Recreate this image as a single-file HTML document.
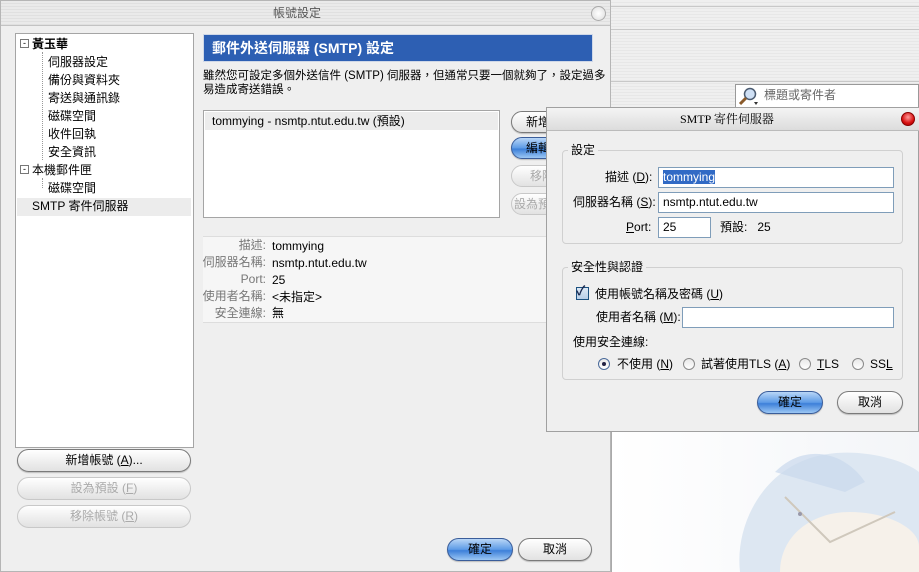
<!DOCTYPE html>
<html><head><meta charset="utf-8">
<style>
*{box-sizing:border-box;margin:0;padding:0}
body{width:919px;height:572px;overflow:hidden;position:relative;background:#ececec;font-family:"Liberation Sans","Noto Sans CJK TC",sans-serif;font-size:12px;color:#000}
.a{position:absolute}
.t{position:absolute;white-space:nowrap;line-height:14px}
.btn{position:absolute;border:1px solid #7a7a7a;border-radius:12px;background:linear-gradient(#fff,#f0f0f0 50%,#e2e2e2);text-align:center;font-size:12px;line-height:20px;box-shadow:0 1px 1px #bbb}
.dis{color:#aaa;border-color:#c8c8c8;box-shadow:none}
.blue{background:linear-gradient(#b9d6f7,#5d9be6 50%,#3c7fd9 55%,#9cc7f4);border-color:#3a5d9a}
.inp{position:absolute;background:#fff;border:1px solid #7f9db9;height:21px;padding-left:4px;line-height:19px;font-size:12px}
.grp{position:absolute;border:1px solid #d0d0d0;border-radius:4px}
.rad{position:absolute;width:12px;height:12px;border-radius:50%;border:1px solid #8a8a8a;background:linear-gradient(#e8e8e8,#fff)}
.lbl{position:absolute;white-space:nowrap;line-height:14px;color:#777;right:0;text-align:right}
</style></head><body>
<!-- right background window -->
<div class="a" style="left:610px;top:0;width:309px;height:432px;background:repeating-linear-gradient(#efefef 0 2px,#e7e7e7 2px 3px)"></div>
<div class="a" style="left:610px;top:6px;width:309px;height:1px;background:#c8c8c8"></div>
<div class="a" style="left:610px;top:29px;width:309px;height:1px;background:#c8c8c8"></div>
<div class="a" style="left:610px;top:81px;width:309px;height:1px;background:#c8c8c8"></div>
<div class="a" style="left:735px;top:84px;width:184px;height:24px;background:#fff;border:1px solid #999"></div>
<svg class="a" style="left:738px;top:87px" width="22" height="20"><circle cx="12" cy="7" r="5.5" fill="#cfe0f5" stroke="#4a5a70" stroke-width="1.5"/><line x1="8" y1="11" x2="2" y2="17" stroke="#8a5a2a" stroke-width="3"/><path d="M16 15l4 0-2 3z" fill="#333"/></svg>
<div class="t" style="left:764px;top:88px;color:#666">標題或寄件者</div>
<div class="a" style="left:610px;top:431px;width:309px;height:141px;background:linear-gradient(90deg,#fff,#f3f5f8)"></div>
<div class="a" style="left:611px;top:431px;width:1px;height:141px;background:#aaa"></div>
<svg class="a" style="left:735px;top:432px" width="184" height="140"><path d="M5 140C0 95 25 45 70 28C110 12 165 25 184 40V140Z" fill="#dde7f2"/><path d="M45 140C45 105 75 80 115 80C150 80 184 95 184 115V140Z" fill="#f6f1ea"/><path d="M40 40C70 10 110 20 130 50L110 60Z" fill="#c9d9ec" opacity=".7"/><path d="M50 65L95 110 160 80" fill="none" stroke="#cfc8bc" stroke-width="2"/><circle cx="65" cy="82" r="2" fill="#99a"/></svg>

<!-- main dialog -->
<div class="a" style="left:0;top:0;width:611px;height:572px;background:#efefef;border:1px solid #b5b5b5"></div>
<div class="a" style="left:1px;top:1px;width:609px;height:25px;background:repeating-linear-gradient(#eaeaea 0 2px,#e0e0e0 2px 3px);border-bottom:1px solid #c3c3c3"></div>
<div class="t" style="left:273px;top:6px;color:#555">帳號設定</div>
<div class="a" style="left:591px;top:6px;width:15px;height:15px;border-radius:50%;border:1px solid #aaa;background:radial-gradient(#fff,#ddd)"></div>

<div class="a" style="left:15px;top:33px;width:179px;height:415px;background:#fff;border:1px solid #a5a5a5"></div>
<div class="a" style="left:17px;top:198px;width:174px;height:18px;background:#ececec"></div>
<div class="a" style="left:42px;top:52px;width:0;height:108px;border-left:1px dotted #999"></div>
<div class="a" style="left:42px;top:178px;width:0;height:10px;border-left:1px dotted #999"></div>
<div class="a" style="left:20px;top:39px;width:9px;height:9px;border:1px solid #777;font-size:9px;line-height:6px;text-align:center">-</div>
<div class="a" style="left:20px;top:165px;width:9px;height:9px;border:1px solid #777;font-size:9px;line-height:6px;text-align:center">-</div>
<div class="t" style="left:32px;top:37px;font-weight:bold">黃玉華</div>
<div class="t" style="left:48px;top:55px">伺服器設定</div>
<div class="t" style="left:48px;top:73px">備份與資料夾</div>
<div class="t" style="left:48px;top:91px">寄送與通訊錄</div>
<div class="t" style="left:48px;top:109px">磁碟空間</div>
<div class="t" style="left:48px;top:127px">收件回執</div>
<div class="t" style="left:48px;top:145px">安全資訊</div>
<div class="t" style="left:32px;top:163px">本機郵件匣</div>
<div class="t" style="left:48px;top:181px">磁碟空間</div>
<div class="t" style="left:32px;top:199px">SMTP 寄件伺服器</div>

<div class="btn" style="left:17px;top:449px;width:174px;height:23px">新增帳號 (<u>A</u>)...</div>
<div class="btn dis" style="left:17px;top:477px;width:174px;height:23px">設為預設 (<u>F</u>)</div>
<div class="btn dis" style="left:17px;top:505px;width:174px;height:23px">移除帳號 (<u>R</u>)</div>

<div class="a" style="left:203px;top:34px;width:390px;height:28px;background:#2d5fb3;border:1px solid #cfd8e8"></div>
<div class="t" style="left:212px;top:40px;color:#fff;font-weight:bold;font-size:14px;line-height:16px">郵件外送伺服器 (SMTP) 設定</div>
<div class="t" style="left:203px;top:69px;font-size:11.5px">雖然您可設定多個外送信件 (SMTP) 伺服器，但通常只要一個就夠了，設定過多</div>
<div class="t" style="left:203px;top:83px;font-size:11.5px">易造成寄送錯誤。</div>

<div class="a" style="left:203px;top:110px;width:297px;height:108px;background:#fff;border:1px solid #a5a5a5"></div>
<div class="a" style="left:205px;top:112px;width:293px;height:18px;background:#ececec"></div>
<div class="t" style="left:212px;top:114px">tommying - nsmtp.ntut.edu.tw (預設)</div>

<div class="btn" style="left:511px;top:111px;width:60px;height:22px;text-align:left;padding-left:14px">新增</div>
<div class="btn blue" style="left:511px;top:137px;width:60px;height:22px;text-align:left;padding-left:14px">編輯</div>
<div class="btn dis" style="left:511px;top:165px;width:60px;height:22px;text-align:left;padding-left:18px">移除</div>
<div class="btn dis" style="left:511px;top:193px;width:60px;height:22px;text-align:left;padding-left:2px">設為預設</div>

<div class="a" style="left:203px;top:236px;width:345px;height:87px;background:#f6f6f6;border-top:1px solid #ddd;border-bottom:1px solid #ddd"></div>
<div class="a" style="left:200px;top:238px;width:66px;height:80px">
<div class="lbl" style="top:0">描述:</div>
<div class="lbl" style="top:17px">伺服器名稱:</div>
<div class="lbl" style="top:34px">Port:</div>
<div class="lbl" style="top:51px">使用者名稱:</div>
<div class="lbl" style="top:68px">安全連線:</div>
</div>
<div class="t" style="left:272px;top:239px">tommying</div>
<div class="t" style="left:272px;top:256px">nsmtp.ntut.edu.tw</div>
<div class="t" style="left:272px;top:273px">25</div>
<div class="t" style="left:272px;top:290px">&lt;未指定&gt;</div>
<div class="t" style="left:272px;top:306px">無</div>

<div class="btn blue" style="left:447px;top:538px;width:66px;height:23px">確定</div>
<div class="btn" style="left:518px;top:538px;width:74px;height:23px">取消</div>

<!-- SMTP dialog -->
<div class="a" style="left:546px;top:107px;width:373px;height:325px;background:#efefef;border:1px solid #a0a0a0"></div>
<div class="a" style="left:547px;top:108px;width:372px;height:23px;background:linear-gradient(#f4f4f4,#dcdcdc);border-bottom:1px solid #bbb"></div>
<div class="t" style="left:680px;top:112px;font-family:'Liberation Serif','Noto Serif CJK SC',serif">SMTP 寄件伺服器</div>
<div class="a" style="left:901px;top:112px;width:14px;height:14px;border-radius:50%;background:radial-gradient(circle at 50% 35%,#ff9a9a,#d81010 60%,#900);border:1px solid #800"></div>

<div class="grp" style="left:562px;top:150px;width:341px;height:94px"></div>
<div class="t" style="left:568px;top:143px;background:#efefef;padding:0 3px">設定</div>
<div class="t" style="left:605px;top:170px">描述 (<u>D</u>):</div>
<div class="t" style="left:573px;top:195px">伺服器名稱 (<u>S</u>):</div>
<div class="t" style="left:626px;top:220px"><u>P</u>ort:</div>
<div class="inp" style="left:658px;top:167px;width:236px"><span style="background:#316ac5;color:#fff">tommying</span></div>
<div class="inp" style="left:658px;top:192px;width:236px">nsmtp.ntut.edu.tw</div>
<div class="inp" style="left:658px;top:217px;width:53px">25</div>
<div class="t" style="left:720px;top:220px">預設:&nbsp;&nbsp;&nbsp;25</div>

<div class="grp" style="left:562px;top:267px;width:341px;height:113px"></div>
<div class="t" style="left:568px;top:260px;background:#efefef;padding:0 3px">安全性與認證</div>
<div class="a" style="left:576px;top:287px;width:13px;height:13px;border:1px solid #1c5180;background:linear-gradient(#dce8f5,#b8cfe8)"></div>
<div class="t" style="left:576px;top:284px;font-weight:bold;font-size:13px;color:#1a2a50">✓</div>
<div class="t" style="left:595px;top:287px">使用帳號名稱及密碼 (<u>U</u>)</div>
<div class="t" style="left:596px;top:310px">使用者名稱 (<u>M</u>):</div>
<div class="inp" style="left:682px;top:307px;width:212px"></div>
<div class="t" style="left:573px;top:335px">使用安全連線:</div>
<div class="rad" style="left:598px;top:358px;border-color:#4a6a9a"><div class="a" style="left:3px;top:3px;width:4px;height:4px;border-radius:50%;background:#224"></div></div>
<div class="t" style="left:617px;top:357px">不使用 (<u>N</u>)</div>
<div class="rad" style="left:683px;top:358px"></div>
<div class="t" style="left:701px;top:357px">試著使用TLS (<u>A</u>)</div>
<div class="rad" style="left:799px;top:358px"></div>
<div class="t" style="left:817px;top:357px"><u>T</u>LS</div>
<div class="rad" style="left:852px;top:358px"></div>
<div class="t" style="left:870px;top:357px">SS<u>L</u></div>

<div class="btn blue" style="left:757px;top:391px;width:66px;height:23px">確定</div>
<div class="btn" style="left:837px;top:391px;width:66px;height:23px">取消</div>
</body></html>
